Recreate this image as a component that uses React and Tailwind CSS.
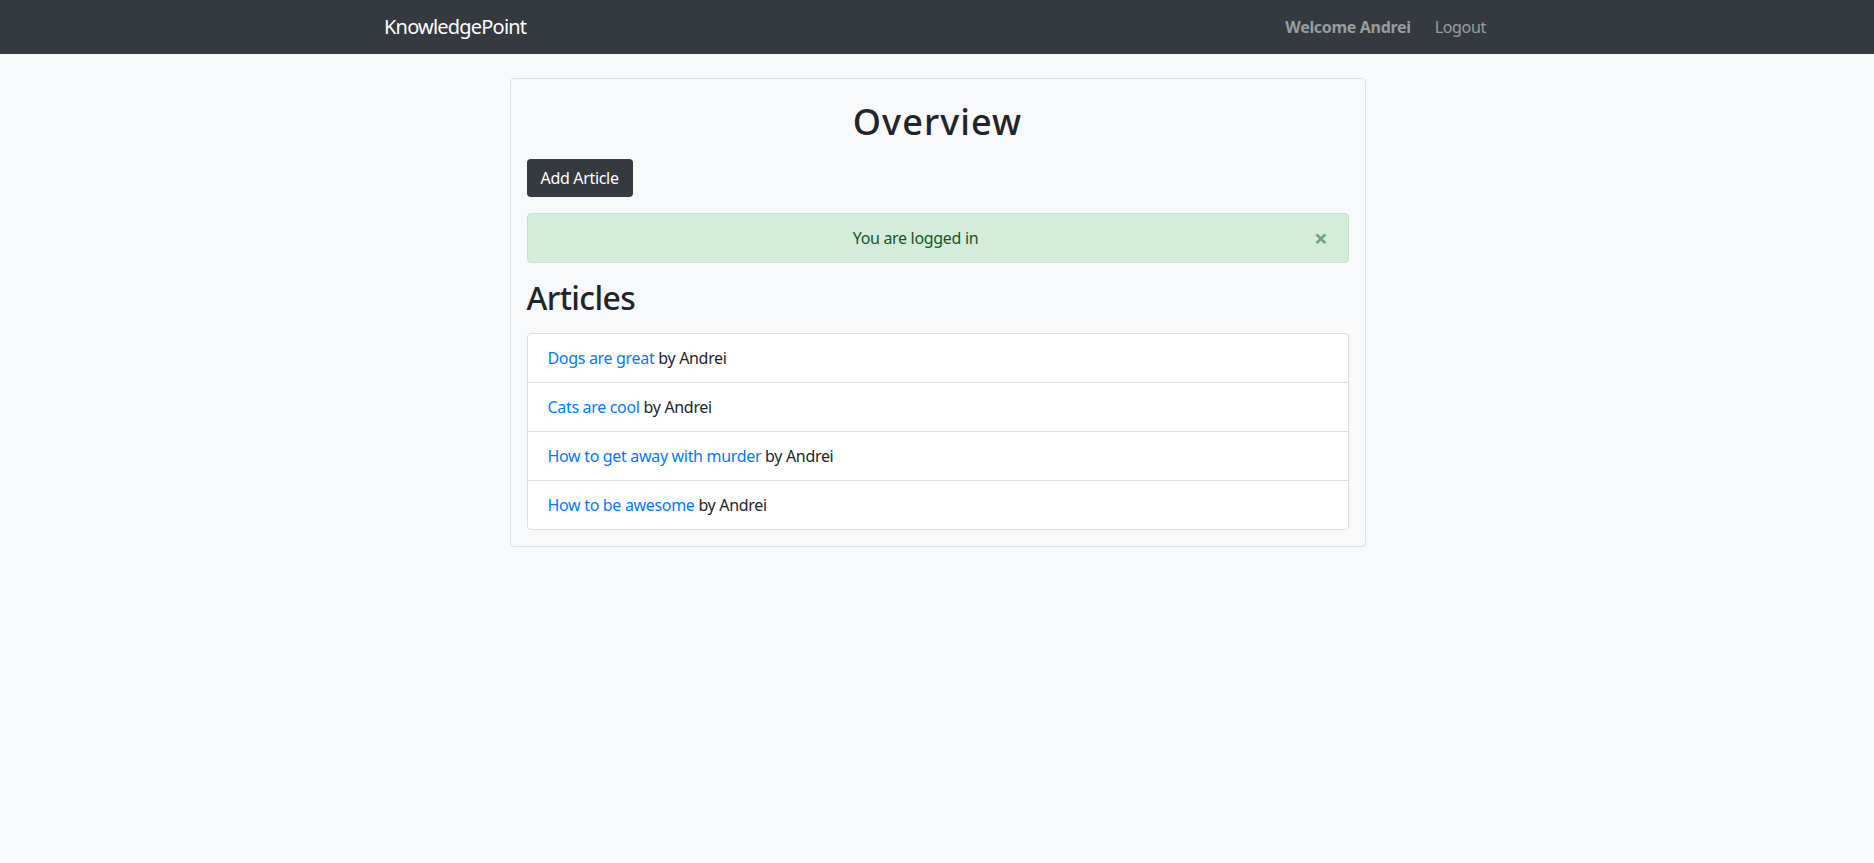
const articles = [
  { id: 1, title: "Dogs are great", author: "Andrei" },
  { id: 2, title: "Cats are cool", author: "Andrei" },
  { id: 3, title: "How to get away with murder", author: "Andrei" },
  { id: 4, title: "How to be awesome", author: "Andrei" },
];

function Navbar() {
  return (
    <nav className="bg-[#343a40] h-[54px]">
      <div className="w-[1140px] mx-auto px-[15px] h-full flex items-center justify-between">
        <a href="#" className="text-white text-[20px] leading-[30px] tracking-[-0.04em] ml-[2px]">
          KnowledgePoint
        </a>
        <div className="flex items-center">
          <span className="text-white/50 font-bold px-2">Welcome Andrei</span>
          <a href="#" className="text-white/50 pl-2 pr-[6px] ml-[8px]">
            Logout
          </a>
        </div>
      </div>
    </nav>
  );
}

export default function App() {
  return (
    <div className="min-h-screen bg-[#f8f9fa] text-[#212529] text-[16px] leading-6 tracking-[-0.02em] font-['Noto_Sans',sans-serif]">
      <Navbar />
      <main className="pt-6 pl-[1px]">
        <div className="w-[856px] mx-auto bg-[#f8f9fa] border border-[#dee2e6] rounded-[4px] p-4">
          <h1 className="text-center text-[36px] leading-[43px] tracking-[0.03em] font-medium pt-[5px] mb-[16px]">
            Overview
          </h1>
          <button className="bg-[#343a40] text-white rounded-[4px] px-[14px] h-[38px] leading-6">
            Add Article
          </button>
          <div className="relative mt-4 bg-[#d4edda] border border-[#c3e6cb] text-[#155724] rounded-[4px] pl-5 pr-16 py-3 text-center">
            You are logged in
            <button className="absolute right-0 top-0 px-5 py-3 text-[24px] leading-6 font-bold text-[#155724] opacity-50">
              ×
            </button>
          </div>
          <h2 className="text-[32px] leading-[38px] tracking-[-0.02em] font-medium mt-4 mb-4">Articles</h2>
          <ul className="bg-white border border-[#dfdfdf] rounded-[4px]">
            {articles.map((a, i) => (
              <li
                key={a.id}
                className={`px-5 py-3 ${i > 0 ? "border-t border-[#dfdfdf]" : ""}`}
              >
                <a href="#" className="text-[#007bff]">{a.title}</a> by {a.author}
              </li>
            ))}
          </ul>
        </div>
      </main>
    </div>
  );
}
